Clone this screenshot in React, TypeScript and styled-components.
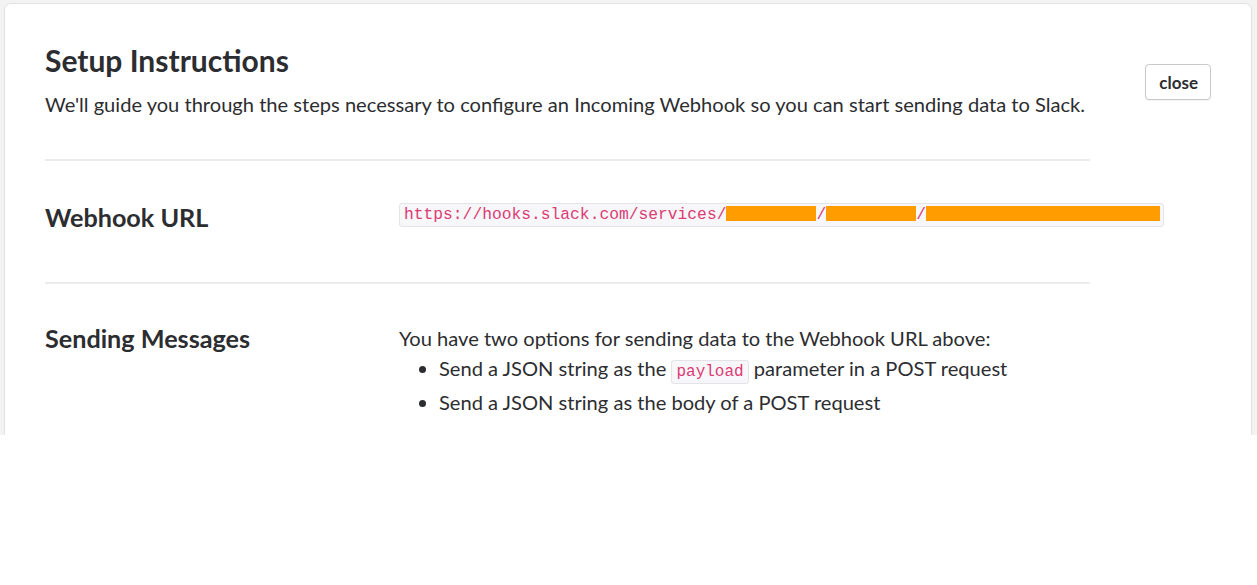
import React from "react";
import styled, { createGlobalStyle } from "styled-components";

const Global = createGlobalStyle`
  html, body { margin: 0; padding: 0; background: #ffffff; }
  body { font-family: Lato, "Noto Sans", sans-serif; color: #2c2d30; -webkit-font-smoothing: antialiased; }
  * { box-sizing: border-box; }
`;

const Viewport = styled.div`
  height: 435px;
  overflow: hidden;
  background: #f3f3f3;
  padding: 3px 5px 0 4px;
`;

const Card = styled.div`
  background: #fff;
  border: 1px solid #e2e2e2;
  border-radius: 7px;
  box-shadow: 0 1px 2px rgba(0, 0, 0, 0.04);
  padding: 34px 40px 60px 40px;
  min-height: 600px;
`;

const Header = styled.header`
  display: flex;
  align-items: flex-start;
  justify-content: space-between;
  padding-bottom: 41px;
`;

const HeaderText = styled.div`
  width: 1060px;
`;

const Title = styled.h1`
  margin: 0;
  font-size: 30px;
  font-weight: 700;
  line-height: 44px;
`;

const Lead = styled.p`
  margin: 8px 0 0;
  font-size: 20.1px;
  line-height: 28px;
`;

const CloseButton = styled.button`
  margin-top: 26px;
  font-family: Lato, "Noto Sans", sans-serif;
  font-weight: 700;
  font-size: 17px;
  color: #2c2d30;
  background: #fff;
  border: 1px solid #c9c9c9;
  border-radius: 4px;
  height: 36px;
  padding: 0 12px 0 13px;
  box-shadow: 0 1px 1px rgba(0, 0, 0, 0.05);
  cursor: pointer;
`;

const Divider = styled.hr`
  margin: 0;
  width: 1045px;
  border: 0;
  border-top: 2px solid #ebebeb;
`;

const Section = styled.section<{ $pad: string }>`
  display: grid;
  grid-template-columns: 354px 1fr;
  align-items: start;
  padding: ${(p) => p.$pad};
`;

const SectionTitle = styled.h2`
  margin: 0;
  font-size: 25.2px;
  font-weight: 700;
  line-height: 34px;
`;

const UrlBox = styled.code`
  display: block;
  width: 765px;
  height: 24px;
  margin-top: 3px;
  font-family: "Liberation Mono", "Courier New", monospace;
  font-size: 16.3px;
  line-height: 22px;
  color: #dc3b74;
  background: #f7f7f9;
  border: 1px solid #e3e3e8;
  border-radius: 3px;
  padding: 0 4px;
  white-space: nowrap;
  overflow: hidden;
`;

const Redact = styled.span<{ $w: number }>`
  display: inline-block;
  width: ${(p) => p.$w}px;
  height: 15px;
  vertical-align: -2px;
  background: #ff9d00;
`;

const Body = styled.div`
  font-size: 20.1px;
  padding-top: 4px;
`;

const Para = styled.p`
  margin: 0;
  line-height: 26px;
`;

const List = styled.ul`
  margin: 0;
  padding-left: 40px;
  li {
    line-height: 34px;
  }
`;

const InlineCode = styled.code`
  font-family: "Liberation Mono", "Courier New", monospace;
  font-size: 16px;
  line-height: 18px;
  color: #dc3b74;
  background: #f7f7f9;
  border: 1px solid #e3e3e8;
  border-radius: 3px;
  padding: 2px 4px;
`;

export default function App() {
  return (
    <>
      <Global />
      <Viewport>
        <Card>
          <Header>
            <HeaderText>
              <Title>Setup Instructions</Title>
              <Lead>
                We'll guide you through the steps necessary to configure an
                Incoming Webhook so you can start sending data to Slack.
              </Lead>
            </HeaderText>
            <CloseButton>close</CloseButton>
          </Header>
          <Divider />
          <Section $pad="39px 0 48px">
            <SectionTitle>Webhook URL</SectionTitle>
            <UrlBox>
              https://hooks.slack.com/services/
              <Redact $w={90} />/<Redact $w={90} />/<Redact $w={234} />
            </UrlBox>
          </Section>
          <Divider />
          <Section $pad="37px 0 0">
            <SectionTitle>Sending Messages</SectionTitle>
            <Body>
              <Para>
                You have two options for sending data to the Webhook URL above:
              </Para>
              <List>
                <li>
                  Send a JSON string as the <InlineCode>payload</InlineCode>{" "}
                  parameter in a POST request
                </li>
                <li>Send a JSON string as the body of a POST request</li>
              </List>
            </Body>
          </Section>
        </Card>
      </Viewport>
    </>
  );
}
